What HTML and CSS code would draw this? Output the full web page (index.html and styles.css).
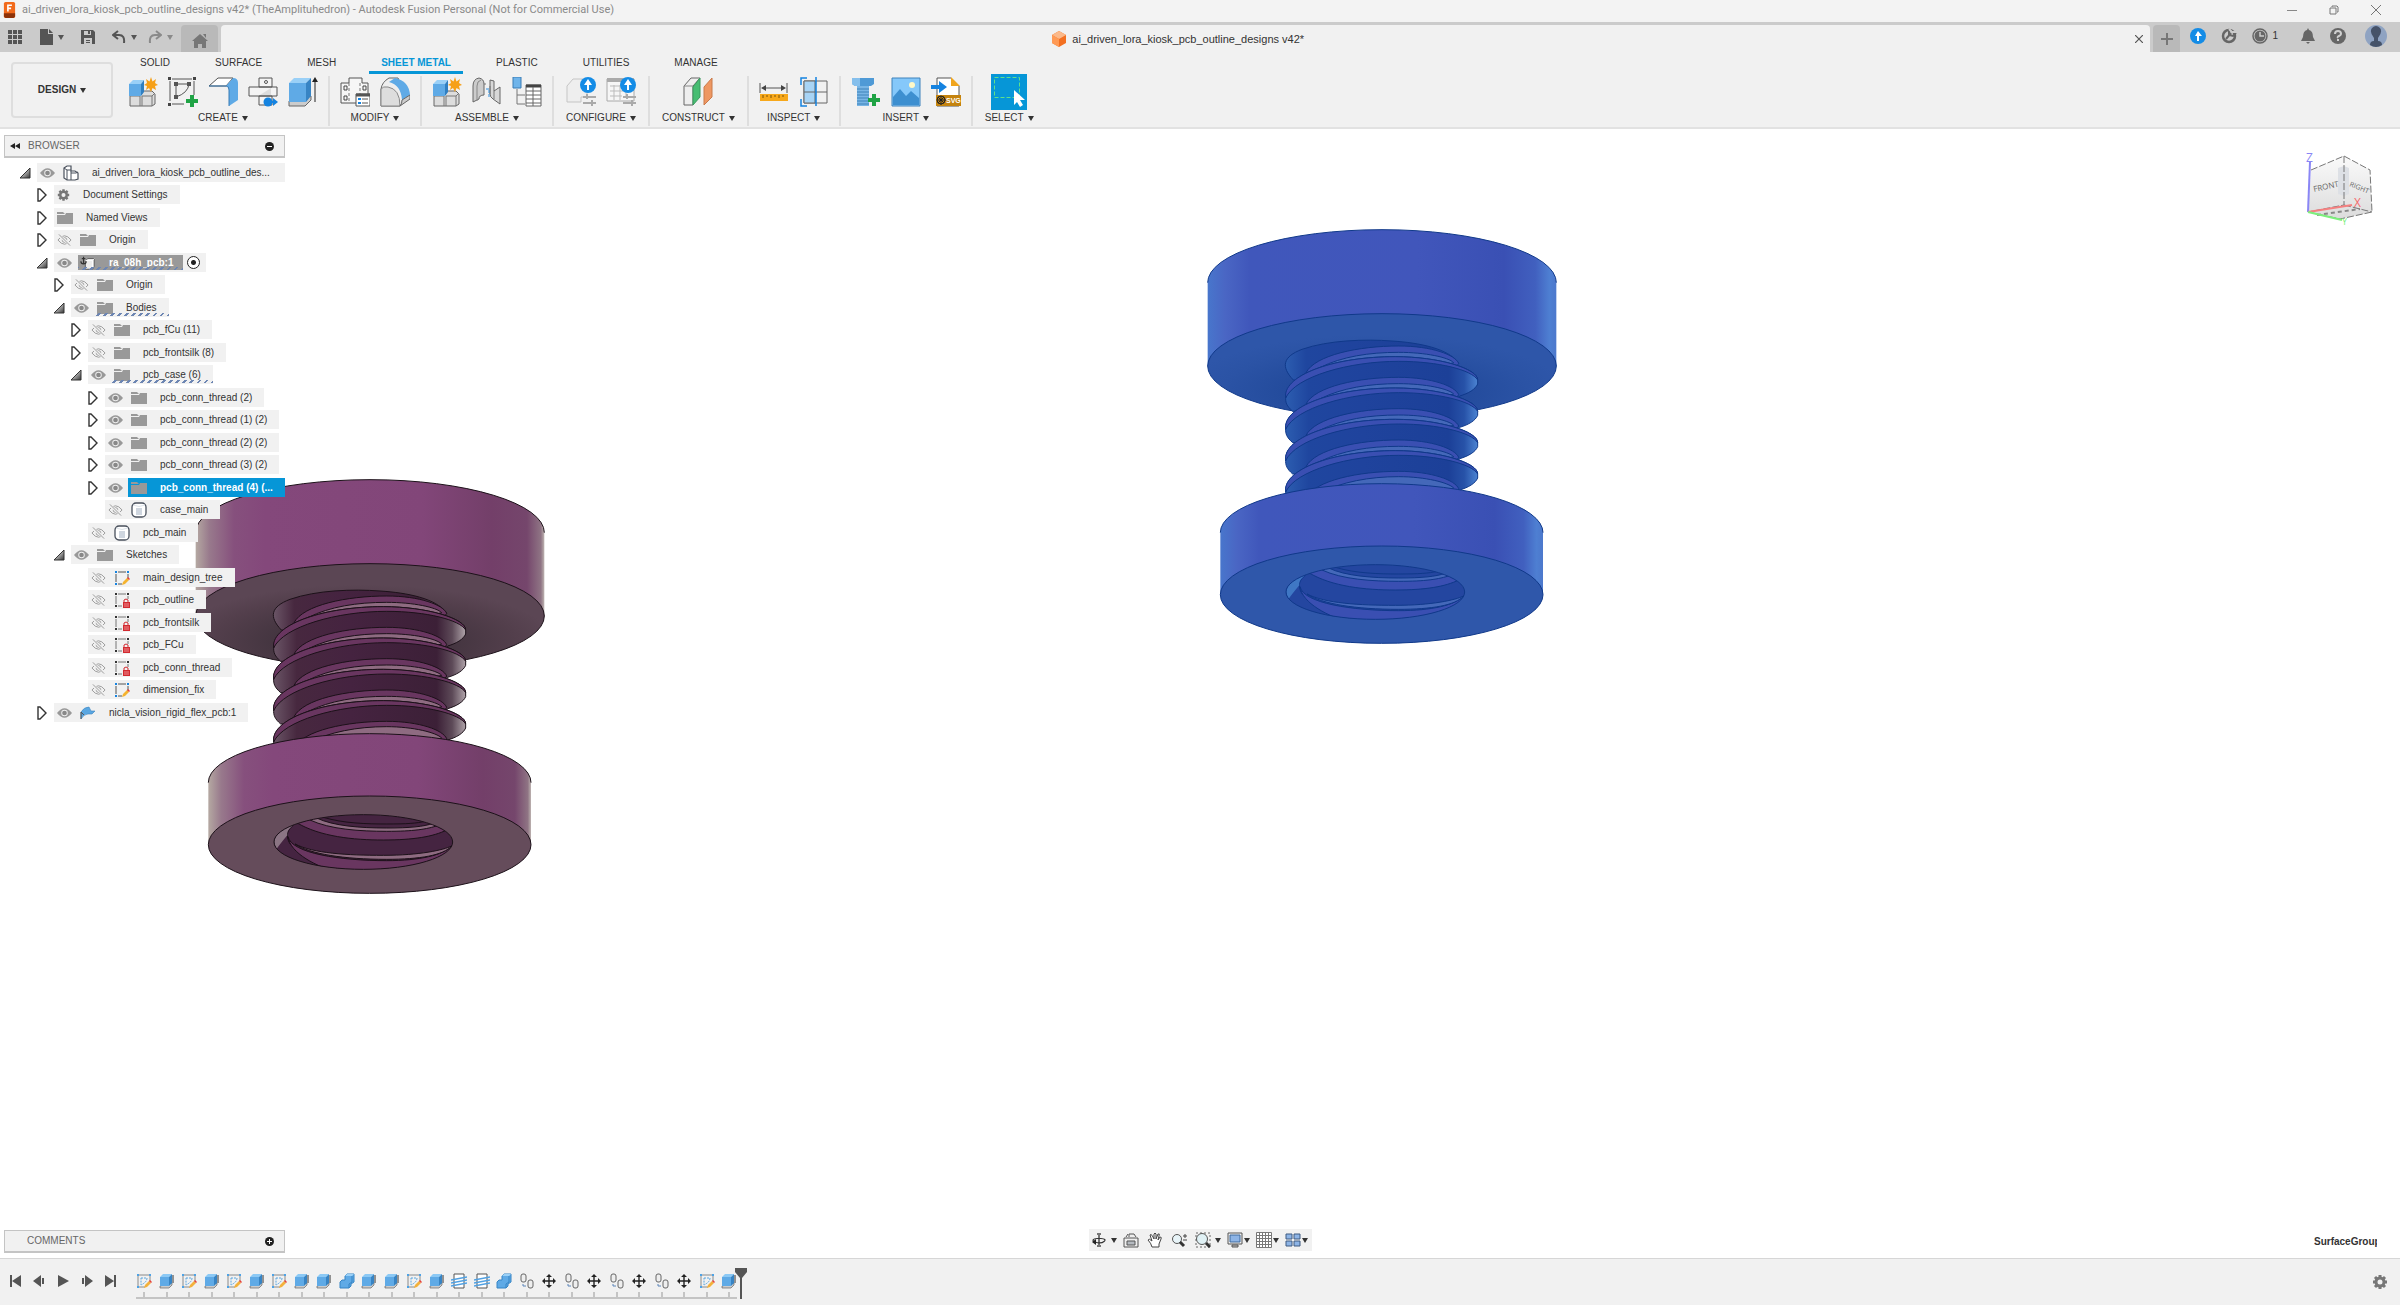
FILE: index.html
```html
<!DOCTYPE html>
<html lang="en">
<head>
    <meta charset="UTF-8">
    <meta name="viewport" content="width=device-width, initial-scale=1.0">
    <title>ai_driven_lora_kiosk_pcb_outline_designs v42* - Autodesk Fusion Personal</title>
    <link rel="stylesheet" href="styles.css">
</head>
<body>
    <!-- Shared icons -->
    <svg class="sprite" aria-hidden="true">
        <defs>
            <linearGradient id="triFill" x1="0" y1="0" x2="1" y2="1">
                <stop offset="0.2" stop-color="#eee"/><stop offset="1" stop-color="#333"/>
            </linearGradient>
            <linearGradient id="cubeFill" x1="0" y1="0" x2="0" y2="1">
                <stop offset="0" stop-color="#fafafa"/><stop offset="1" stop-color="#dcdcdc"/>
            </linearGradient>
            <linearGradient id="purpleSide">
                <stop offset="0" stop-color="#b5a9a2"/><stop offset="0.04" stop-color="#98798c"/>
                <stop offset="0.11" stop-color="#86507d"/><stop offset="0.2" stop-color="#84487b"/>
                <stop offset="0.65" stop-color="#824679"/><stop offset="0.85" stop-color="#733f69"/>
                <stop offset="0.95" stop-color="#75466c"/><stop offset="0.99" stop-color="#8f7484"/>
                <stop offset="1" stop-color="#bdb3b0"/>
            </linearGradient>
            <linearGradient id="blueSide">
                <stop offset="0" stop-color="#4876cc"/><stop offset="0.05" stop-color="#4a66c4"/>
                <stop offset="0.12" stop-color="#4057bb"/><stop offset="0.6" stop-color="#4156bb"/>
                <stop offset="0.85" stop-color="#3a50b4"/><stop offset="0.94" stop-color="#4160bf"/>
                <stop offset="0.98" stop-color="#4e7fd2"/><stop offset="1" stop-color="#4c78cc"/>
            </linearGradient>
            <radialGradient id="purpleUnder" cx="0.48" cy="0.75" r="0.55">
                <stop offset="0" stop-color="#2e2229"/><stop offset="0.45" stop-color="#443540"/>
                <stop offset="0.8" stop-color="#533f4c"/><stop offset="1" stop-color="#5b4654"/>
            </radialGradient>
            <radialGradient id="blueUnder" cx="0.48" cy="0.75" r="0.55">
                <stop offset="0" stop-color="#173d88"/><stop offset="0.45" stop-color="#234b9c"/>
                <stop offset="0.8" stop-color="#2b53a5"/><stop offset="1" stop-color="#2e56a9"/>
            </radialGradient>
            <linearGradient id="purpleFlank">
                <stop offset="0" stop-color="#6a5566"/><stop offset="0.12" stop-color="#47283f"/>
                <stop offset="0.4" stop-color="#452340"/><stop offset="0.85" stop-color="#3c2037"/>
                <stop offset="0.93" stop-color="#5d4a58"/><stop offset="1" stop-color="#b0a4aa"/>
            </linearGradient>
            <linearGradient id="blueFlank">
                <stop offset="0" stop-color="#2c5db0"/><stop offset="0.12" stop-color="#1f469f"/>
                <stop offset="0.4" stop-color="#1f439d"/><stop offset="0.85" stop-color="#1c4098"/>
                <stop offset="0.93" stop-color="#2752a8"/><stop offset="1" stop-color="#4c84d2"/>
            </linearGradient>
            <clipPath id="holeClip"><ellipse cx="550" cy="1116" rx="268" ry="82"/></clipPath>
        </defs>

        <symbol id="eye" viewBox="0 0 16 12">
            <path d="M0 6Q8-4 16 6Q8 16 0 6Z" fill="#999"/>
            <circle cx="8" cy="6" r="3.500" fill="#eee"/><circle cx="8" cy="6" r="2.500" fill="#888"/>
        </symbol>
        <symbol id="eyeOff" viewBox="0 0 16 12">
            <path d="M1 6Q8-3 15 6Q8 15 1 6Z" fill="none" stroke="#999"/>
            <circle cx="8" cy="6" r="2.500" fill="none" stroke="#999"/>
            <path d="M2 1L14 11" stroke="#f0f0f0" stroke-width="3"/><path d="M2 0L14 12" stroke="#999"/>
        </symbol>
        <symbol id="folder" viewBox="0 0 16 14">
            <path d="M0 1h6l2 2H0zM0 4h8l1-2h7v11H0z" fill="#999"/>
        </symbol>
        <symbol id="gear" viewBox="0 0 16 16">
            <circle cx="8" cy="8" r="4" fill="none" stroke="currentColor" stroke-width="3"/>
            <path d="M8 1v3M8 12v3M1 8h3M12 8h3M3 3l2 2M11 11l2 2M13 3l-2 2M5 11l-2 2" stroke="currentColor" stroke-width="3"/>
        </symbol>
        <symbol id="closed" viewBox="0 0 12 14">
            <path d="M2 1L4 1L10 7L4 13L2 13Z" fill="#fff" stroke="#333" stroke-width="1.4"/>
        </symbol>
        <symbol id="open" viewBox="0 0 12 12">
            <path d="M11 1V11H1Z" fill="url(#triFill)" stroke="#333"/>
        </symbol>
        <symbol id="assembly" viewBox="0 0 16 16">
            <path d="M1 3l3-2h4v5h4l3 2v6l-3 1H4l-3-2z" fill="#fff" stroke="#49505c" stroke-width="1.2"/>
            <path d="M1 3l3 2h4M4 5v10M8 6v9M8 8h5l2-1" fill="none" stroke="#49505c"/>
        </symbol>
        <symbol id="bodyIcon" viewBox="0 0 16 16">
            <rect x="1" y="1" width="14" height="14" rx="4" fill="#fff" stroke="#49505c" stroke-width="1.3"/>
            <rect x="5" y="6" width="6" height="7" fill="#cfd6df"/><path d="M2 3q6 3 12 0" fill="none" stroke="#dde3ea"/>
        </symbol>
        <symbol id="anchorPart" viewBox="0 0 18 16">
            <path d="M6 5l3-2h7v9l-2 3H6z" fill="#ececec" stroke="#555"/><path d="M6 5h8v9M14 5l2-2" fill="none" stroke="#fff"/>
            <path d="M4 1v8M2 3h4M1 6q0 3 3 3t3-3" fill="none" stroke="#333" stroke-width="1.3"/>
        </symbol>
        <symbol id="sketchRow" viewBox="0 0 16 16">
            <path d="M4 2h8M2 4v8M14 4v5M4 14h4" stroke="#555" fill="none"/>
            <path d="M1 1h2v2H1zM13 1h2v2h-2zM1 13h2v2H1z" fill="#1583e0"/>
            <path d="M8 15l1-3 4-4 2 2-4 4z" fill="#f5b32e"/><path d="M13 8l1-1 2 2-1 1z" fill="#e8403a"/>
        </symbol>
        <symbol id="sketchLock" viewBox="0 0 16 16">
            <path d="M4 2h8M2 4v8M14 4v3M4 14h4" stroke="#777" fill="none"/>
            <path d="M1 1h2v2H1zM13 1h2v2h-2zM1 13h2v2H1z" fill="#333"/>
            <path d="M10 10V8q2-2 4 0v2" fill="none" stroke="#d22a30"/><path d="M9 10h7v6H9z" fill="#d22a30"/>
            <path d="M10 12h5M10 14h5" stroke="#ef8d90"/>
        </symbol>
        <symbol id="flexPcb" viewBox="0 0 16 14">
            <path d="M1 13V6Q4 1 9 1L11 5H15L12 8H8Q4 8 1 13Z" fill="#5aa7e2" stroke="#3c85c0" stroke-width="0.6"/>
            <path d="M1 13V6l3 3" fill="none" stroke="#555"/>
        </symbol>
        <symbol id="sketch" viewBox="0 0 16 16">
            <path d="M3 2h10M2 3v10M14 3v6M3 14h6" stroke="#8a8a8a" fill="none"/>
            <path d="M1 1h2v2H1zM13 1h2v2h-2zM1 13h2v2H1z" fill="#4ea3e6"/>
            <path d="M5 5h6Q11 9 5 12Z" fill="none" stroke="#59a5e0" stroke-dasharray="2 1"/>
            <path d="M8 15l1-3 4-4 2 2-4 4z" fill="#f3b13c"/><path d="M13 8l1-1 2 2-1 1z" fill="#e8403a"/>
        </symbol>
        <symbol id="extrude" viewBox="0 0 16 16">
            <path d="M1 13v2h9l3-3v-2z" fill="#ccc" stroke="#666" stroke-width="0.7"/>
            <path d="M1 4l3-3h9l-3 3z" fill="#8cc9f5"/><path d="M1 4h9v9H1z" fill="#5faae6"/><path d="M10 4l3-3v9l-3 3z" fill="#3784c4"/>
            <path d="M14 2v8" stroke="#333"/>
        </symbol>
        <symbol id="combine" viewBox="0 0 16 16">
            <path d="M6 3l2-2h7v8l-3 2v2l-2 2H1V9l2-2h3z" fill="#5faae6" stroke="#3784c4"/>
            <path d="M6 3l2-2h7l-2 2z" fill="#9ad0f7"/><path d="M13 3v6l-3 2v4" fill="none" stroke="#3784c4"/>
        </symbol>
        <symbol id="thread" viewBox="0 0 16 16">
            <path d="M3 1h10v14H3z" fill="#fff" stroke="#555"/>
            <path d="M0 7l16-3M0 10l16-3M0 13l16-3" stroke="#51a1e2" stroke-width="1.500"/>
        </symbol>
        <symbol id="copyBody" viewBox="0 0 16 16">
            <rect x="2" y="1" width="5" height="8" rx="2" fill="#eee" stroke="#666"/>
            <rect x="9" y="7" width="5" height="8" rx="2" fill="#eee" stroke="#666"/>
            <path d="M4 11v2h3" fill="none" stroke="#5b84b8"/>
        </symbol>
        <symbol id="move" viewBox="0 0 16 16">
            <path d="M8 2v12M2 8h12" stroke="#222" stroke-width="1.4"/>
            <path d="M8 1l3 3H5zM8 15l3-3H5zM1 8l3-3v6zM15 8l-3-3v6z" fill="#222"/>
        </symbol>
        <symbol id="newComponent" viewBox="0 0 30 30">
            <path d="M2 17l3-3h19l3 3v10l-3 2H2z" fill="#ddd" stroke="#666"/>
            <path d="M2 19h10v10M14 29V19h10v10M12 19l3-4M24 19l3-3" fill="none" stroke="#777"/>
            <path d="M1 7l4-4h11l-3 4z" fill="#9ad0f7"/><path d="M1 7h12v12H1z" fill="#5faae6"/><path d="M13 7l3-4v12l-3 4z" fill="#2f7fc2"/>
            <path d="M23 0l1.500 4.500L28 2 27 6l3 2-3 1 1 4-3.500-2L23 15l-2-4-3 2 1-4-3-1 3-2-1-4 3.500 2.500z" fill="#f6a017"/>
        </symbol>
        <symbol id="bolt" viewBox="42 21 1062 1260">
            <path d="M47 188A523 159 0 0 1 1093 188V438H47Z" fill="var(--side)"/>
            <path d="M47 188A523 159 0 0 1 1093 188" class="edge"/>
            <ellipse cx="570" cy="438" rx="523" ry="157" fill="var(--under)" class="edge-line"/>
            <!-- thread, each turn overlaps the one above it -->
            <path d="M304 480C266 440 272 410 330 388C410 360 520 357 600 363C680 368 770 385 800 430L700 500Z" fill="var(--flank)" class="edge-line"/>
            <g id="turn">
                <path d="M342 458C370 405 500 378 620 378C720 378 790 405 800 430L780 460Z" fill="var(--crest)" class="edge-line"/>
                <path d="M385 442C450 410 530 397 620 397C700 397 770 412 785 428L700 450Z" fill="var(--light)" class="edge-line"/>
                <path d="M281 530C280 462 430 410 610 410C740 410 858 446 857 480V492C850 508 830 520 803 528L780 555L302 574C284 558 280 548 281 530Z" fill="var(--flank)" class="edge-line"/>
                <path d="M281 522C288 462 430 410 610 410C740 410 858 446 857 480C840 450 740 424 620 424C470 424 310 470 281 534Z" fill="var(--crest)" class="edge-line"/>
            </g>
            <use href="#turn" y="94"/>
            <use href="#turn" y="188"/>
            <use href="#turn" y="282"/>
            <path d="M342 834C370 781 500 754 620 754C720 754 790 781 800 806L780 836Z" fill="var(--crest)" class="edge-line"/>
            <path d="M385 818C450 786 530 770 620 770C700 770 770 788 785 804L700 826Z" fill="var(--light)" class="edge-line"/>
            <path d="M85 938A484 147 0 0 1 1053 938V1124H85Z" fill="var(--side)"/>
            <path d="M85 938A484 147 0 0 1 1053 938" class="edge"/>
            <ellipse cx="569" cy="1124" rx="484" ry="146" fill="var(--ring)" class="edge-line"/>
            <g clip-path="url(#holeClip)">
                <ellipse cx="550" cy="1116" rx="268" ry="82" fill="var(--inner)"/>
                <path d="M282 1116C284 1090 310 1070 350 1058C325 1075 318 1090 324 1108C330 1140 410 1180 490 1200L380 1190C320 1180 280 1140 282 1116Z" fill="var(--inner)" class="edge-line"/>
                <path d="M282 1112C286 1090 310 1070 350 1058C325 1075 320 1085 322 1096Q310 1110 290 1136Q282 1126 282 1112Z" fill="var(--glint)"/>
                <path d="M324 1100C335 1150 480 1172 620 1172C720 1172 790 1155 815 1128L830 1160L600 1210H480C410 1190 330 1150 324 1100Z" fill="var(--crest)" class="edge-line"/>
                <path d="M345 1122C400 1150 500 1156 610 1156C720 1156 790 1140 815 1128C790 1156 720 1168 620 1168C490 1168 390 1152 345 1122Z" fill="var(--light)" class="edge-line"/>
                <path d="M350 1058C420 1100 520 1110 610 1110C700 1110 760 1100 800 1080L720 1020H420Z" fill="var(--crest)" class="edge-line"/>
                <path d="M390 1050C450 1078 540 1084 620 1084C700 1084 740 1078 775 1066L700 1020H420Z" fill="var(--light)" class="edge-line"/>
                <path d="M410 1044C460 1068 540 1074 620 1074C690 1074 730 1070 760 1060L700 1020H420Z" fill="var(--inner)" class="edge-line"/>
                <path d="M430 1042C490 1060 560 1062 620 1062C680 1062 710 1060 735 1054" class="edge"/>
            </g>
            <ellipse cx="550" cy="1116" rx="268" ry="82" class="edge"/>
        </symbol>
    </svg>

    <header class="titlebar">
        <svg class="app-logo" viewBox="0 0 14 20"><rect width="14" height="20" rx="2" fill="#f26a1b"/><path d="M0 14h14v4l-2 2H2l-2-2z" fill="#8e3208"/><path d="M5 12V4h5M5 8h4" stroke="#fff" stroke-width="2" fill="none"/></svg>
        <h1>ai_driven_lora_kiosk_pcb_outline_designs v42* (TheAmplituhedron) - Autodesk Fusion Personal (Not for Commercial Use)</h1>
        <div class="window-buttons">
            <button aria-label="Minimize"><svg viewBox="0 0 10 10"><path d="M0 5.500h10" stroke="#888"/></svg></button>
            <button aria-label="Restore"><svg viewBox="0 0 10 10"><path d="M3 2V1h5l1 1v5H8M1 3h6v6H1z" fill="none" stroke="#777"/></svg></button>
            <button aria-label="Close"><svg viewBox="0 0 10 10"><path d="M0 0l10 10M10 0L0 10" stroke="#777"/></svg></button>
        </div>
    </header>

    <div class="tabbar">
        <div class="quick">
            <button aria-label="Data panel"><svg width="14" height="14" viewBox="0 0 14 14"><path d="M0 2h14M0 7h14M0 12h14" stroke="#555" stroke-width="4" stroke-dasharray="4 1"/></svg></button>
            <button class="has-arrow file" aria-label="File"><svg width="14" height="16" viewBox="0 0 14 16"><path d="M1 0h8v5h5v11H1zM10 0l4 4h-4z" fill="#555"/></svg></button>
            <button aria-label="Save"><svg width="14" height="14" viewBox="0 0 14 14"><path d="M0 0h12l2 2v12H0z" fill="#555"/><path d="M3 1h7v4H3zM3 8h8v6H3z" fill="#cbcbcb"/><path d="M7 1h2v3H7zM5 10h4v1H5zM5 12h4v1H5z" fill="#555"/></svg></button>
            <button class="has-arrow" aria-label="Undo"><svg width="14" height="14" viewBox="0 0 14 14"><path d="M1 5h6q6 0 5 8M6 1L1 5l5 4" fill="none" stroke="#555" stroke-width="2"/></svg></button>
            <button class="has-arrow dim" aria-label="Redo"><svg width="14" height="14" viewBox="0 0 14 14"><path d="M13 5H7q-6 0-5 8M8 1l5 4-5 4" fill="none" stroke="#8a8a8a" stroke-width="2"/></svg></button>
        </div>
        <button class="home-tab" aria-label="Home"><svg width="16" height="14" viewBox="0 0 16 14"><path d="M8 0l8 7h-2v7h-4v-4H6v4H2V7H0zM11 0h3v4z" fill="#777"/></svg></button>
        <div class="doc-tab">
            <span class="doc-name">
                <svg width="14" height="16" viewBox="0 0 14 16"><path d="M7 0l7 4v8l-7 4-7-4V4z" fill="#f37021"/><path d="M7 0l7 4-7 4-7-4z" fill="#fbb98a"/><path d="M0 4l7 4v8l-7-4z" fill="#ff9a55"/></svg>
                ai_driven_lora_kiosk_pcb_outline_designs v42*
            </span>
            <button aria-label="Close tab"><svg width="8" height="8" viewBox="0 0 8 8"><path d="M0 0l8 8M8 0L0 8" stroke="#555" stroke-width="1.200"/></svg></button>
        </div>
        <button class="add-tab" aria-label="New tab"><svg width="12" height="12" viewBox="0 0 12 12"><path d="M6 0v12M0 6h12" stroke="#777" stroke-width="2"/></svg></button>
        <div class="account">
            <button aria-label="Extensions"><svg width="16" height="16" viewBox="0 0 16 16"><circle cx="8" cy="8" r="8" fill="#148ce6"/><path d="M8 3l4 5H9v5H7V8H5z" fill="#fff"/></svg></button>
            <button aria-label="Updates"><svg width="16" height="16" viewBox="0 0 16 16"><circle cx="8" cy="8" r="6" fill="none" stroke="#666" stroke-width="2.500"/><path d="M5 11l5-6M8 2v5l4 1 3-3" fill="none" stroke="#666" stroke-width="2"/><path d="M8 1l3 3 4 0" stroke="#cbcbcb" stroke-width="2" fill="none"/></svg></button>
            <button aria-label="Job status"><svg width="16" height="16" viewBox="0 0 16 16"><circle cx="8" cy="8" r="7" fill="none" stroke="#666" stroke-width="1.500"/><circle cx="8" cy="8" r="5.500" fill="#666"/><path d="M8 4v4h4" fill="none" stroke="#ccc" stroke-width="1.500"/></svg>1</button>
            <button aria-label="Notifications"><svg width="14" height="16" viewBox="0 0 14 16"><path d="M7 0l1 2q4 1 4 7l2 4H0l2-4q0-6 4-7zM5 14h4l-2 2z" fill="#666"/></svg></button>
            <button aria-label="Help"><svg width="16" height="16" viewBox="0 0 16 16"><circle cx="8" cy="8" r="8" fill="#666"/><path d="M5 6q0-3 3-3t3 3q0 1-2 2t-1 2M8 11v2" fill="none" stroke="#d0d0d0" stroke-width="2"/></svg></button>
            <button aria-label="Profile"><svg width="22" height="22" viewBox="0 0 22 22"><circle cx="11" cy="11" r="11" fill="#8fa3c2"/><path d="M5 20q0-4 4-4v-3Q4 7 7 3q4-4 8 0 3 4-2 10v3q4 0 4 4-6 4-12 0z" fill="#465369"/></svg></button>
        </div>
    </div>

    <div class="ribbon">
        <button class="workspace">DESIGN <i class="arrow"></i></button>
        <div class="ribbon-main">
            <nav class="ribbon-tabs">
                <a href="#">SOLID</a>
                <a href="#">SURFACE</a>
                <a href="#">MESH</a>
                <a href="#" class="active">SHEET METAL</a>
                <a href="#">PLASTIC</a>
                <a href="#">UTILITIES</a>
                <a href="#">MANAGE</a>
            </nav>
            <div class="groups">
                <div class="group">
                    <div class="tools">
                        <button aria-label="New component"><svg><use href="#newComponent"/></svg></button>
                        <button aria-label="Create sketch"><svg viewBox="0 0 30 30"><path d="M4 2h20M2 4v20M26 4v14M4 27h12" stroke="#555" fill="none"/><path d="M0 0h3v3H0zM25 0h3v3h-3zM0 26h3v3H0z" fill="#444"/><path d="M8 7h13Q20 16 8 20Z" fill="none" stroke="#555"/><path d="M6 5h4v4H6zM19 5h4v4h-4zM6 18h4v4H6z" fill="#555"/><path d="M22 18h4v4h4v4h-4v4h-4v-4h-4v-4h4z" fill="#1fa345"/></svg></button>
                        <button aria-label="Flange"><svg viewBox="0 0 30 30"><path d="M1 9L10 1h15L18 9z" fill="#fff" stroke="#555"/><path d="M18 9l7-8q5 0 5 5v17l-9 6V13q0-4-3-4z" fill="#5faae6"/><path d="M1 9h17q3 0 3 4v16" fill="none" stroke="#3b7cb5"/></svg></button>
                        <button aria-label="Unfold"><svg viewBox="0 0 30 30"><path d="M11 1h13v9H11zM1 10h28v9H1zM11 19h13v9H11z" fill="#f4f4f4" stroke="#555"/><path d="M12 18l11-7v7z" fill="#ddd"/><circle cx="18" cy="5" r="1.500" fill="none" stroke="#555"/><circle cx="20" cy="25" r="4.500" fill="#1583e0"/><path d="M22 24h3v-3l5 4-5 4v-3h-3z" fill="#1583e0"/></svg></button>
                        <button aria-label="Extrude"><svg viewBox="0 0 30 30"><path d="M1 24v5h16l6-6v-4z" fill="#ccc" stroke="#666"/><path d="M1 6l5-5h17l-5 5z" fill="#9ad0f7"/><path d="M1 6h17v19H1z" fill="#5faae6"/><path d="M18 6l5-5v18l-5 6z" fill="#3784c4"/><path d="M27 3v22" stroke="#222"/><path d="M27 0l3 5h-6z" fill="#222"/></svg></button>
                    </div>
                    <button class="group-label">CREATE <i class="arrow"></i></button>
                </div>
                <div class="group">
                    <div class="tools">
                        <button aria-label="Rules"><svg viewBox="0 0 30 30"><path d="M9 1h13v5h6v20H1V6h8z" fill="#f6f6f6" stroke="#555"/><path d="M9 6v20M20 6v20" stroke="#777" stroke-dasharray="3 2"/><path d="M4 9h3v4H4zM4 19h3v4H4zM23 9h3v4h-3z" fill="none" stroke="#444"/><path d="M16 17h14v12H16z" fill="#fff" stroke="#555"/><path d="M16 18h14" stroke="#555" stroke-width="3"/><path d="M18 22h3M18 26h3" stroke="#1583e0" stroke-width="2"/><path d="M22 22h6M22 26h6" stroke="#555"/></svg></button>
                        <button aria-label="Fillet"><svg viewBox="0 0 30 30"><path d="M1 29V12Q2 5 9 1h9l9 20-7 8z" fill="#eee" stroke="#666"/><path d="M1 12q2-3 7-2 12 2 12 19H1z" fill="#ddd" stroke="#888"/><path d="M9 5l6-4q14 3 15 17l-8 5Q21 8 9 5z" fill="#5faae6"/><path d="M20 29q2-2 2-6l8-5v4z" fill="#ccc" stroke="#666"/></svg></button>
                    </div>
                    <button class="group-label">MODIFY <i class="arrow"></i></button>
                </div>
                <div class="group">
                    <div class="tools">
                        <button aria-label="New component"><svg><use href="#newComponent"/></svg></button>
                        <button aria-label="Joint"><svg viewBox="0 0 30 30"><path d="M1 25V9q0-7 6-8 5 1 5 6v11q-5 0-5 4z" fill="#ccc" stroke="#666"/><path d="M5 24V9q0-5 4-6" fill="none" stroke="#888"/><path d="M18 3l4 1v10l6-4v17l-7-5q-3-2-3-5z" fill="#d8d8d8" stroke="#666"/><path d="M22 14v8M12 7h2M18 9v8" stroke="#777"/><path d="M14 12h3v8" stroke="#2f8fdf" stroke-dasharray="3 1" fill="none"/></svg></button>
                        <button aria-label="Table"><svg viewBox="0 0 30 30"><path d="M1 0h8v11H1z" fill="#6fb4ea" stroke="#3b7cb5"/><path d="M5 12v15h8M5 18h8" fill="none" stroke="#777"/><path d="M14 8h15v21H14z" fill="#fff" stroke="#666"/><path d="M14 9h15" stroke="#444" stroke-width="3"/><path d="M14 14h15M14 18h15M14 22h15M14 26h15M21 10v19" stroke="#666"/></svg></button>
                    </div>
                    <button class="group-label">ASSEMBLE <i class="arrow"></i></button>
                </div>
                <div class="group">
                    <div class="tools">
                        <button aria-label="Configure"><svg viewBox="0 0 30 30"><path d="M1 9l6-7h14v18H15v5H1z" fill="#eee" stroke="#c5c5c5"/><path d="M17 20h13M17 26h13M21 17v5M26 23v6" stroke="#aaa" stroke-width="2"/><circle cx="22" cy="8" r="8" fill="#148ce6"/><path d="M22 2l4 6h-3v5h-2V8h-3z" fill="#fff"/></svg></button>
                        <button aria-label="Configuration table"><svg viewBox="0 0 30 30"><path d="M1 2h27v22H1z" fill="#f6f6f6" stroke="#aaa"/><path d="M1 3h27" stroke="#aaa" stroke-width="4"/><path d="M4 9h20M4 14h20M4 19h12M8 8v15M14 8v15M20 8v12" stroke="#bbb"/><path d="M17 20h13M17 26h13M21 17v5M26 23v6" stroke="#aaa" stroke-width="2"/><circle cx="22" cy="8" r="8" fill="#148ce6"/><path d="M22 2l4 6h-3v5h-2V8h-3z" fill="#fff"/></svg></button>
                    </div>
                    <button class="group-label">CONFIGURE <i class="arrow"></i></button>
                </div>
                <div class="group">
                    <div class="tools">
                        <button aria-label="Offset plane"><svg viewBox="0 0 30 30"><path d="M1 9l7-8h9l-7 8v19H1z" fill="#eee" stroke="#666"/><path d="M1 9h9" stroke="#888"/><path d="M10 10l7-9v19l-7 8z" fill="#47bd72" stroke="#3b9a5e"/><path d="M21 10l8-9v19l-8 8z" fill="#ee9762" stroke="#c97a4b"/></svg></button>
                    </div>
                    <button class="group-label">CONSTRUCT <i class="arrow"></i></button>
                </div>
                <div class="group">
                    <div class="tools">
                        <button aria-label="Measure"><svg viewBox="0 0 30 30"><path d="M1 6v10M28 6v10M4 11h21" stroke="#555"/><path d="M2 11l5-3v6zM27 11l-5-3v6z" fill="#444"/><path d="M1 17h28v7H1z" fill="#f7a81b"/><path d="M4 18v3M8 18v2M12 18v3M16 18v2M20 18v3M24 18v2" stroke="#7a5208"/></svg></button>
                        <button aria-label="Section analysis"><svg viewBox="0 0 30 30"><path d="M5 4h23v22H5zM16 4v22M5 15h23" fill="none" stroke="#666"/><path d="M5 4h11v22H5z" fill="#a8d4f5" stroke="#666"/><path d="M5 15h11" stroke="#666"/><path d="M2 8V1h6M2 22v7h6M17 0v29" fill="none" stroke="#1583e0" stroke-width="1.500"/></svg></button>
                    </div>
                    <button class="group-label">INSPECT <i class="arrow"></i></button>
                </div>
                <div class="group">
                    <div class="tools">
                        <button aria-label="Insert fastener"><svg viewBox="0 0 30 30"><path d="M1 1h22v6l-3 2H4L1 7z" fill="#4f9ad6"/><path d="M1 1h8v8H4L1 7z" fill="#85bfec"/><path d="M6 9h12v20H6z" fill="#78b5e5"/><path d="M6 12h12M6 15h12M6 18h12M6 21h12M6 24h12M6 27h12" stroke="#3f83ba"/><path d="M21 17h4v4h4v4h-4v4h-4v-4h-4v-4h4z" fill="#1fa345"/></svg></button>
                        <button aria-label="Canvas"><svg viewBox="0 0 30 30"><path d="M1 1h28v28H1z" fill="#85c8fa" stroke="#3e82bb"/><path d="M2 20l7-8 6 7 5-5 8 7v7H2z" fill="#3d8fd0"/><circle cx="21" cy="8" r="3" fill="#fff9c8"/></svg></button>
                        <button aria-label="Insert SVG"><svg viewBox="0 0 30 30"><path d="M6 1h14l8 8v20H6z" fill="#fff" stroke="#555"/><path d="M20 0l9 9h-9z" fill="#f0a51f"/><path d="M0 8h8V4l8 6-8 6v-4H0z" fill="#1583e0"/><path d="M5 18h25v11H5z" fill="#c4830e"/><circle cx="10" cy="23" r="4" fill="none" stroke="#222"/><path d="M10 19v9M6 23h9M7 20l6 6M13 20l-6 6" stroke="#222"/><text x="15" y="26" class="svg-tag">SVG</text></svg></button>
                    </div>
                    <button class="group-label">INSERT <i class="arrow"></i></button>
                </div>
                <div class="group">
                    <div class="tools">
                        <button class="select-tool" aria-label="Select"><svg viewBox="0 0 36 36"><rect x="3.500" y="3.500" width="25" height="20" fill="none" stroke="#5fe08a" stroke-dasharray="4 2"/><path d="M23 16v15l3-3 3 5 3-2-3-5h5z" fill="#fff"/></svg></button>
                    </div>
                    <button class="group-label">SELECT <i class="arrow"></i></button>
                </div>
            </div>
        </div>
    </div>

    <main class="viewport">
        <svg class="bolt bolt-purple"><use href="#bolt"/></svg>
        <svg class="bolt bolt-blue"><use href="#bolt"/></svg>

        <svg class="view-cube" viewBox="0 0 80 80">
            <path d="M11 22L44 8L70 22L72 64L40 71L8 64Z" fill="url(#cubeFill)"/>
            <path d="M38 20L44 18L49 20V46L44 48L38 46Z" fill="#dde0e5"/>
            <path d="M11 22L44 8L70 22L72 64L40 71L8 64M44 8V57L8 64M44 57L72 64" fill="none" stroke="#777" stroke-dasharray="7 2"/>
            <path d="M17 67L60 61" stroke="#888" stroke-width="2" stroke-dasharray="4 3"/>
            <text x="14" y="44" transform="rotate(-12 14 44)">FRONT</text>
            <text x="49" y="38" transform="rotate(22 49 38)" class="small">RIGHT</text>
            <path d="M10 14L8 64" stroke="#8a86f5" stroke-width="2"/>
            <path d="M8 64L52 57" stroke="#f58080" stroke-width="2"/>
            <path d="M8 64L42 72" stroke="#7df07d" stroke-width="2"/>
            <text x="6" y="14" class="axis axis-z">Z</text>
            <text x="54" y="59" class="axis axis-x">X</text>
            <text x="42" y="77" class="axis axis-y">Y</text>
        </svg>

        <section class="browser">
            <div class="panel-head">
                <svg width="10" height="6" viewBox="0 0 10 6"><path d="M5 0v6L0 3zM10 0v6L5 3z" fill="#222"/></svg>
                <h2>BROWSER</h2>
                <button aria-label="Collapse"><svg width="9" height="9" viewBox="0 0 9 9"><circle cx="4.500" cy="4.500" r="4.500" fill="#222"/><path d="M2 4.500h5" stroke="#fff"/></svg></button>
            </div>
            <ul class="tree">
                <li class="l0"><button class="toggle"><svg><use href="#open"/></svg></button><div class="node wide"><svg class="eye"><use href="#eye"/></svg><svg class="icon"><use href="#assembly"/></svg><span>ai_driven_lora_kiosk_pcb_outline_des...</span></div></li>
                <li class="l1"><button class="toggle"><svg><use href="#closed"/></svg></button><div class="node no-eye"><svg class="icon gear"><use href="#gear"/></svg><span>Document Settings</span></div></li>
                <li class="l1"><button class="toggle"><svg><use href="#closed"/></svg></button><div class="node no-eye"><svg class="icon"><use href="#folder"/></svg><span>Named Views</span></div></li>
                <li class="l1"><button class="toggle"><svg><use href="#closed"/></svg></button><div class="node"><svg class="eye"><use href="#eyeOff"/></svg><svg class="icon"><use href="#folder"/></svg><span>Origin</span></div></li>
                <li class="l1"><button class="toggle"><svg><use href="#open"/></svg></button><div class="node activated"><svg class="eye"><use href="#eye"/></svg><div class="mark hatched"><svg class="icon"><use href="#anchorPart"/></svg><span>ra_08h_pcb:1</span></div><input type="radio" name="active" aria-label="Activate component" checked></div></li>
                <li class="l2"><button class="toggle"><svg><use href="#closed"/></svg></button><div class="node"><svg class="eye"><use href="#eyeOff"/></svg><svg class="icon"><use href="#folder"/></svg><span>Origin</span></div></li>
                <li class="l2"><button class="toggle"><svg><use href="#open"/></svg></button><div class="node hatched"><svg class="eye"><use href="#eye"/></svg><svg class="icon"><use href="#folder"/></svg><span>Bodies</span></div></li>
                <li class="l3"><button class="toggle"><svg><use href="#closed"/></svg></button><div class="node"><svg class="eye"><use href="#eyeOff"/></svg><svg class="icon"><use href="#folder"/></svg><span>pcb_fCu (11)</span></div></li>
                <li class="l3"><button class="toggle"><svg><use href="#closed"/></svg></button><div class="node"><svg class="eye"><use href="#eyeOff"/></svg><svg class="icon"><use href="#folder"/></svg><span>pcb_frontsilk (8)</span></div></li>
                <li class="l3"><button class="toggle"><svg><use href="#open"/></svg></button><div class="node hatched"><svg class="eye"><use href="#eye"/></svg><svg class="icon"><use href="#folder"/></svg><span>pcb_case (6)</span></div></li>
                <li class="l4"><button class="toggle"><svg><use href="#closed"/></svg></button><div class="node"><svg class="eye"><use href="#eye"/></svg><svg class="icon"><use href="#folder"/></svg><span>pcb_conn_thread (2)</span></div></li>
                <li class="l4"><button class="toggle"><svg><use href="#closed"/></svg></button><div class="node"><svg class="eye"><use href="#eye"/></svg><svg class="icon"><use href="#folder"/></svg><span>pcb_conn_thread (1) (2)</span></div></li>
                <li class="l4"><button class="toggle"><svg><use href="#closed"/></svg></button><div class="node"><svg class="eye"><use href="#eye"/></svg><svg class="icon"><use href="#folder"/></svg><span>pcb_conn_thread (2) (2)</span></div></li>
                <li class="l4"><button class="toggle"><svg><use href="#closed"/></svg></button><div class="node"><svg class="eye"><use href="#eye"/></svg><svg class="icon"><use href="#folder"/></svg><span>pcb_conn_thread (3) (2)</span></div></li>
                <li class="l4"><button class="toggle"><svg><use href="#closed"/></svg></button><div class="node wide selected"><svg class="eye"><use href="#eye"/></svg><div class="mark"><svg class="icon"><use href="#folder"/></svg><span>pcb_conn_thread (4) (...</span></div></div></li>
                <li class="l4 leaf"><div class="node"><svg class="eye"><use href="#eyeOff"/></svg><svg class="icon"><use href="#bodyIcon"/></svg><span>case_main</span></div></li>
                <li class="l3 leaf"><div class="node"><svg class="eye"><use href="#eyeOff"/></svg><svg class="icon"><use href="#bodyIcon"/></svg><span>pcb_main</span></div></li>
                <li class="l2"><button class="toggle"><svg><use href="#open"/></svg></button><div class="node"><svg class="eye"><use href="#eye"/></svg><svg class="icon"><use href="#folder"/></svg><span>Sketches</span></div></li>
                <li class="l3 leaf"><div class="node"><svg class="eye"><use href="#eyeOff"/></svg><svg class="icon"><use href="#sketchRow"/></svg><span>main_design_tree</span></div></li>
                <li class="l3 leaf"><div class="node"><svg class="eye"><use href="#eyeOff"/></svg><svg class="icon"><use href="#sketchLock"/></svg><span>pcb_outline</span></div></li>
                <li class="l3 leaf"><div class="node"><svg class="eye"><use href="#eyeOff"/></svg><svg class="icon"><use href="#sketchLock"/></svg><span>pcb_frontsilk</span></div></li>
                <li class="l3 leaf"><div class="node"><svg class="eye"><use href="#eyeOff"/></svg><svg class="icon"><use href="#sketchLock"/></svg><span>pcb_FCu</span></div></li>
                <li class="l3 leaf"><div class="node"><svg class="eye"><use href="#eyeOff"/></svg><svg class="icon"><use href="#sketchLock"/></svg><span>pcb_conn_thread</span></div></li>
                <li class="l3 leaf"><div class="node"><svg class="eye"><use href="#eyeOff"/></svg><svg class="icon"><use href="#sketchRow"/></svg><span>dimension_fix</span></div></li>
                <li class="l1"><button class="toggle"><svg><use href="#closed"/></svg></button><div class="node"><svg class="eye"><use href="#eye"/></svg><svg class="icon"><use href="#flexPcb"/></svg><span>nicla_vision_rigid_flex_pcb:1</span></div></li>
            </ul>
        </section>

        <div class="viewport-foot">
            <section class="panel-head comments">
                <h2>COMMENTS</h2>
                <button aria-label="Expand"><svg width="9" height="9" viewBox="0 0 9 9"><circle cx="4.500" cy="4.500" r="4.500" fill="#222"/><path d="M2 4.500h5M4.500 2v5" stroke="#fff"/></svg></button>
            </section>
            <div class="nav-tools">
                <button class="spaced" aria-label="Orbit"><svg viewBox="0 0 16 16"><path d="M8 1v14M6 2h4M6 14h4" stroke="#777" stroke-width="2"/><path d="M3 10Q0 7 6 6.500H10Q16 7 13 9.500T4 10" fill="none" stroke="#333" stroke-width="1.200"/><path d="M1 10l4-3v6z" fill="#222"/></svg><i class="arrow"></i></button>
                <button aria-label="Look at"><svg viewBox="0 0 16 16"><path d="M1 6h14v9H1zM3 5l2-3M6 5V2h5l2 3" fill="#eee" stroke="#555"/><path d="M4 9h8v4H4z" fill="#b5bac0" stroke="#555"/></svg></button>
                <button aria-label="Pan"><svg viewBox="0 0 16 16"><path d="M5 15Q4 11 1 8q1-2 4 1L3 3q1-2 3 2l1 2V2q1-2 2 0v5l2-5q2-1 1 2l-1 4 2-3q2 0 1 2l-2 5v3z" fill="#fff" stroke="#444"/></svg></button>
                <button aria-label="Zoom"><svg viewBox="0 0 16 16"><circle cx="6" cy="7" r="4.500" fill="#e8f4f8" stroke="#555"/><path d="M9 10l4 4" stroke="#333" stroke-width="3"/><path d="M12 4h4M14 2v4M12 8h4" stroke="#444"/></svg></button>
                <button class="spaced" aria-label="Fit"><svg viewBox="0 0 16 16"><path d="M1 1h14v14H1z" fill="none" stroke="#666" stroke-dasharray="2 2"/><circle cx="7" cy="7" r="5.500" fill="#e0f1f5" stroke="#555"/><path d="M11 11l4 4" stroke="#333" stroke-width="3"/></svg><i class="arrow"></i></button>
                <button aria-label="Display settings"><svg viewBox="0 0 16 16"><path d="M1 1h14v11H1z" fill="#eee" stroke="#555"/><path d="M3 3h10v7H3z" fill="#8db4e6" stroke="#3d689c"/><path d="M5 13h6v2H5z" fill="#bbb" stroke="#555"/></svg><i class="arrow"></i></button>
                <button aria-label="Grid and snaps"><svg viewBox="0 0 16 16"><path d="M0 0h16v16H0z" fill="#fff"/><path d="M.5 .5h15v15H.5zM3.500 0v16M6.500 0v16M9.500 0v16M12.500 0v16M0 3.500h16M0 6.500h16M0 9.500h16M0 12.500h16" fill="none" stroke="#777"/></svg><i class="arrow"></i></button>
                <button aria-label="Viewports"><svg viewBox="0 0 16 16"><path d="M1 2h6v5H1zM9 2h6v5H9zM1 9h6v5H1zM9 9h6v5H9z" fill="#8db4e6" stroke="#3f5b80"/></svg><i class="arrow"></i></button>
            </div>
            <span class="selection">SurfaceGroup</span>
        </div>
    </main>

    <footer class="timeline">
        <div class="playback">
            <button aria-label="Start"><svg viewBox="0 0 12 12"><path d="M1 0h2v12H1zM12 0v12L3 6z" fill="#555"/></svg></button>
            <button aria-label="Step back"><svg viewBox="0 0 12 12"><path d="M8 0v12L0 6zM9 3h2v6H9z" fill="#555"/></svg></button>
            <button aria-label="Play"><svg viewBox="0 0 12 12"><path d="M1 0v12L12 6z" fill="#555"/></svg></button>
            <button aria-label="Step forward"><svg viewBox="0 0 12 12"><path d="M4 0v12l8-6zM1 3h2v6H1z" fill="#555"/></svg></button>
            <button aria-label="End"><svg viewBox="0 0 12 12"><path d="M9 0h2v12H9zM0 0v12l9-6z" fill="#555"/></svg></button>
        </div>
        <ol class="features">
            <li><svg><use href="#sketch"/></svg></li>
            <li><svg><use href="#extrude"/></svg></li>
            <li><svg><use href="#sketch"/></svg></li>
            <li><svg><use href="#extrude"/></svg></li>
            <li><svg><use href="#sketch"/></svg></li>
            <li><svg><use href="#extrude"/></svg></li>
            <li><svg><use href="#sketch"/></svg></li>
            <li><svg><use href="#extrude"/></svg></li>
            <li><svg><use href="#extrude"/></svg></li>
            <li><svg><use href="#combine"/></svg></li>
            <li><svg><use href="#extrude"/></svg></li>
            <li><svg><use href="#extrude"/></svg></li>
            <li><svg><use href="#sketch"/></svg></li>
            <li><svg><use href="#extrude"/></svg></li>
            <li><svg><use href="#thread"/></svg></li>
            <li><svg><use href="#thread"/></svg></li>
            <li><svg><use href="#combine"/></svg></li>
            <li><svg><use href="#copyBody"/></svg></li>
            <li><svg><use href="#move"/></svg></li>
            <li><svg><use href="#copyBody"/></svg></li>
            <li><svg><use href="#move"/></svg></li>
            <li><svg><use href="#copyBody"/></svg></li>
            <li><svg><use href="#move"/></svg></li>
            <li><svg><use href="#copyBody"/></svg></li>
            <li><svg><use href="#move"/></svg></li>
            <li><svg><use href="#sketch"/></svg></li>
            <li><svg><use href="#extrude"/></svg></li>
        </ol>
        <svg class="marker" viewBox="0 0 12 31"><path d="M0 0h12v4L7 10v21H5V10L0 4z" fill="#555"/></svg>
        <button class="settings" aria-label="Timeline settings"><svg class="gear"><use href="#gear"/></svg></button>
    </footer>
</body>
</html>
```
FILE: styles.css
```css
* {
    box-sizing: border-box;
}
body {
    margin: 0;
    height: 100vh;
    display: flex;
    flex-direction: column;
    overflow: hidden;
    background: #fff;
    color: #333;
    font: 10px/16px "Liberation Sans", Arial, sans-serif;
}
h1, h2, ul, ol {
    margin: 0;
    padding: 0;
    font-size: inherit;
    font-weight: normal;
    list-style: none;
}
button {
    display: flex;
    align-items: center;
    justify-content: center;
    margin: 0;
    padding: 0;
    border: none;
    background: none;
    color: inherit;
    font: inherit;
    cursor: pointer;
}
svg {
    display: block;
    flex: none;
}
.sprite {
    position: absolute;
    width: 0;
    height: 0;
}
.arrow {
    margin-left: 4px;
    border: 3px solid transparent;
    border-top: 5px solid #333;
    border-bottom: none;
}
.gear {
    color: #777;
}

/* Title bar */
.titlebar {
    display: flex;
    align-items: center;
    height: 22px;
    padding: 0 19px 2px 3px;
    background: #f3f3f3;
}
.titlebar h1 {
    margin-left: 6px;
    color: #8a8a8a;
    font: 11px/18px Roboto, "Open Sans", sans-serif;
}
.app-logo {
    width: 13px;
    height: 16px;
}
.window-buttons {
    display: flex;
    gap: 32px;
    margin-left: auto;
}
.window-buttons svg {
    width: 10px;
    height: 10px;
}

/* Document tabs */
.tabbar {
    display: flex;
    align-items: stretch;
    height: 30px;
    padding-top: 3px;
    background: #cbcbcb;
}
.quick {
    flex: none;
    display: flex;
    align-items: center;
    gap: 17px;
    width: 181px;
    padding: 0 8px 3px;
}
.quick .has-arrow {
    margin-right: -6px;
}
.quick .file {
    margin-right: 0;
}
.quick .has-arrow::after {
    content: "";
    margin-left: 5px;
    border: 3px solid transparent;
    border-top: 5px solid #555;
    border-bottom: none;
}
.quick .dim::after {
    border-top-color: #8a8a8a;
}
.home-tab, .add-tab {
    width: 37px;
    background: #b9b9b9;
    border-radius: 4px 4px 0 0;
}
.home-tab svg {
    margin-top: 4px;
}
.doc-tab {
    flex: 1;
    display: flex;
    align-items: center;
    margin: 0 3px;
    padding-right: 7px;
    background: #f1f1f1;
    border-radius: 4px 4px 0 0;
}
.doc-name {
    flex: 1;
    display: flex;
    align-items: center;
    justify-content: center;
    gap: 6px;
    font-size: 11px;
}
.add-tab {
    width: 27px;
}
.account {
    display: flex;
    align-items: center;
    gap: 15px;
    padding: 0 13px 5px 10px;
}
.account button {
    gap: 4px;
}
.account button:nth-child(3) {
    margin-right: 8px;
}
.account button:last-child {
    margin-left: 4px;
}

/* Ribbon */
.ribbon {
    display: flex;
    height: 77px;
    background: #f1f1f1;
    border-bottom: 2px solid #e2e2e2;
}
.workspace {
    width: 102px;
    height: 56px;
    margin: 10px 5px 0 11px;
    border: 2px solid #dedede;
    border-radius: 4px;
    font-weight: bold;
}
.ribbon-tabs {
    display: flex;
    gap: 21px;
    margin: 2px 0 0 10px;
}
.ribbon-tabs a {
    padding: 0 12px;
    border-bottom: 3px solid transparent;
    color: #333;
    line-height: 17px;
    text-decoration: none;
}
.ribbon-tabs .active {
    border-color: #0696d7;
    color: #0696d7;
    font-weight: bold;
}
.groups {
    display: flex;
    margin-top: 2px;
}
.group {
    border-right: 2px solid #dedede;
}
.group:last-child {
    border-right: none;
}
.tools {
    display: flex;
    align-items: center;
    justify-content: center;
    gap: 10px;
    height: 32px;
    padding: 0 10px;
}
.tools svg {
    width: 30px;
    height: 30px;
}
.tools .select-tool {
    background: #0696d7;
}
.select-tool svg {
    width: 36px;
    height: 36px;
}
.svg-tag {
    fill: #fff;
    font: bold 7px "Liberation Sans", sans-serif;
}
.group-label {
    width: 100%;
    margin-top: 2px;
    padding: 0 12px;
    line-height: 16px;
}

/* Viewport */
.viewport {
    position: relative;
    flex: 1;
    display: flex;
    flex-direction: column;
    justify-content: space-between;
    padding: 6px 23px 4px 4px;
}
.bolt {
    position: absolute;
    width: 354px;
    height: 420px;
}
.bolt-purple {
    left: 194px;
    top: 348px;
    --side: url(#purpleSide);
    --under: url(#purpleUnder);
    --flank: url(#purpleFlank);
    --inner: #452441;
    --crest: #693660;
    --light: #8e6b81;
    --glint: #8b7584;
    --ring: #654c5b;
    --edge: #1c1119;
}
.bolt-blue {
    left: calc(50% + 6px);
    top: 98px;
    --side: url(#blueSide);
    --under: url(#blueUnder);
    --flank: url(#blueFlank);
    --inner: #2446a0;
    --crest: #3a4fb2;
    --light: #4468b9;
    --glint: #3f77c4;
    --ring: #2f57aa;
    --edge: #10398a;
}
.edge {
    fill: none;
}
.edge, .edge-line {
    stroke: var(--edge);
    stroke-width: 3px;
}
.view-cube {
    position: absolute;
    top: 19px;
    right: 20px;
    width: 80px;
    height: 80px;
    fill: #666;
    font: 8px "Open Sans", sans-serif;
}
.view-cube .small {
    font-size: 7px;
}
.view-cube .axis {
    font-size: 12px;
}
.axis-z {
    fill: #8a86f5;
}
.axis-x {
    fill: #f56a6a;
}
.view-cube .axis-y {
    fill: #7df07d;
    font-size: 9px;
}

/* Browser tree */
.browser {
    position: relative;
    width: 281px;
}
.panel-head {
    display: flex;
    align-items: center;
    gap: 8px;
    width: 281px;
    height: 23px;
    padding: 0 10px 0 5px;
    background: #f1f1f1;
    border: 1px solid #c4c4c4;
    border-bottom-width: 2px;
    color: #666;
}
.panel-head button {
    margin-left: auto;
}
.tree {
    padding-top: 5px;
}
.tree li {
    display: flex;
    align-items: center;
    height: 19px;
    margin-bottom: 3px;
}
.tree li:nth-child(even) {
    margin-bottom: 4px;
}
.tree .l0 { padding-left: 15px; }
.tree .l1 { padding-left: 32px; }
.tree .l2 { padding-left: 49px; }
.tree .l3 { padding-left: 66px; }
.tree .l4 { padding-left: 83px; }
.toggle {
    width: 12px;
    height: 14px;
    margin-right: 6px;
}
.toggle svg {
    width: 12px;
    height: 14px;
}
.leaf::before {
    content: "";
    width: 18px;
}
.node {
    position: relative;
    display: flex;
    align-items: center;
    height: 19px;
    padding: 0 12px 0 3px;
    background: #f1f1f1;
    white-space: nowrap;
}
.node span {
    margin-left: 13px;
}
.node .eye {
    width: 15px;
    height: 12px;
    margin-right: 8px;
}
.node .icon {
    width: 16px;
    height: 16px;
}
.node .gear {
    width: 13px;
}
.wide {
    flex: 1;
}
.mark {
    position: relative;
    display: flex;
    align-items: center;
    color: #fff;
    font-weight: bold;
}
.activated {
    padding-right: 6px;
}
.activated .mark {
    height: 15px;
    margin-left: -2px;
    padding: 0 10px 0 2px;
    background: #999;
}
.activated input {
    appearance: none;
    width: 13px;
    height: 13px;
    margin: 0 0 0 4px;
    border: 1px solid #222;
    border-radius: 50%;
    background: radial-gradient(#222 0 2px, #fff 3px);
}
.selected {
    padding-right: 0;
}
.selected .mark {
    flex: 1;
    height: 19px;
    margin-left: -3px;
    padding-left: 3px;
    background: #0696d7;
}
.hatched::after {
    content: "";
    position: absolute;
    left: 24px;
    right: 0;
    bottom: 1px;
    height: 3px;
    background: repeating-linear-gradient(-45deg, #6d86b3 0 2px, transparent 2px 5px);
}
.mark.hatched::after {
    left: 0;
    bottom: 0;
}

/* Viewport footer */
.viewport-foot {
    display: grid;
    grid-template-columns: 1fr auto 1fr;
    align-items: center;
    margin: 0 -19px 0 0;
}
.comments {
    padding-left: 22px;
}
.nav-tools {
    display: flex;
    align-items: center;
    gap: 8px;
    height: 22px;
    margin-bottom: 3px;
    padding: 0 6px 0 2px;
    background: #f1f1f1;
}
.nav-tools svg {
    width: 16px;
    height: 16px;
}
.nav-tools .arrow {
    margin: 0 -2px 0 1px;
}
.nav-tools .spaced .arrow {
    margin-left: 4px;
}
.selection {
    justify-self: end;
    width: 63px;
    margin-right: 19px;
    overflow: hidden;
    font-weight: bold;
}

/* Timeline */
.timeline {
    display: flex;
    align-items: flex-start;
    height: 47px;
    padding: 9px 12px 0 9px;
    background: #f1f1f1;
    border-top: 1px solid #d6d6d6;
}
.playback {
    display: flex;
    gap: 12px;
    width: 127px;
    margin-top: 7px;
}
.playback svg {
    width: 12px;
    height: 12px;
}
.features {
    display: flex;
    justify-content: space-between;
    width: 601px;
    margin-top: 5px;
    border-bottom: 2px solid #c4c4c4;
}
.features li::after {
    content: "";
    display: block;
    width: 2px;
    height: 5px;
    margin: 3px auto 0;
    background: #c4c4c4;
}
.features svg {
    width: 16px;
    height: 16px;
}
.marker {
    width: 12px;
    height: 31px;
    margin-left: -2px;
}
.settings {
    margin: 6px 0 0 auto;
}
.settings svg {
    width: 16px;
    height: 16px;
}
```
